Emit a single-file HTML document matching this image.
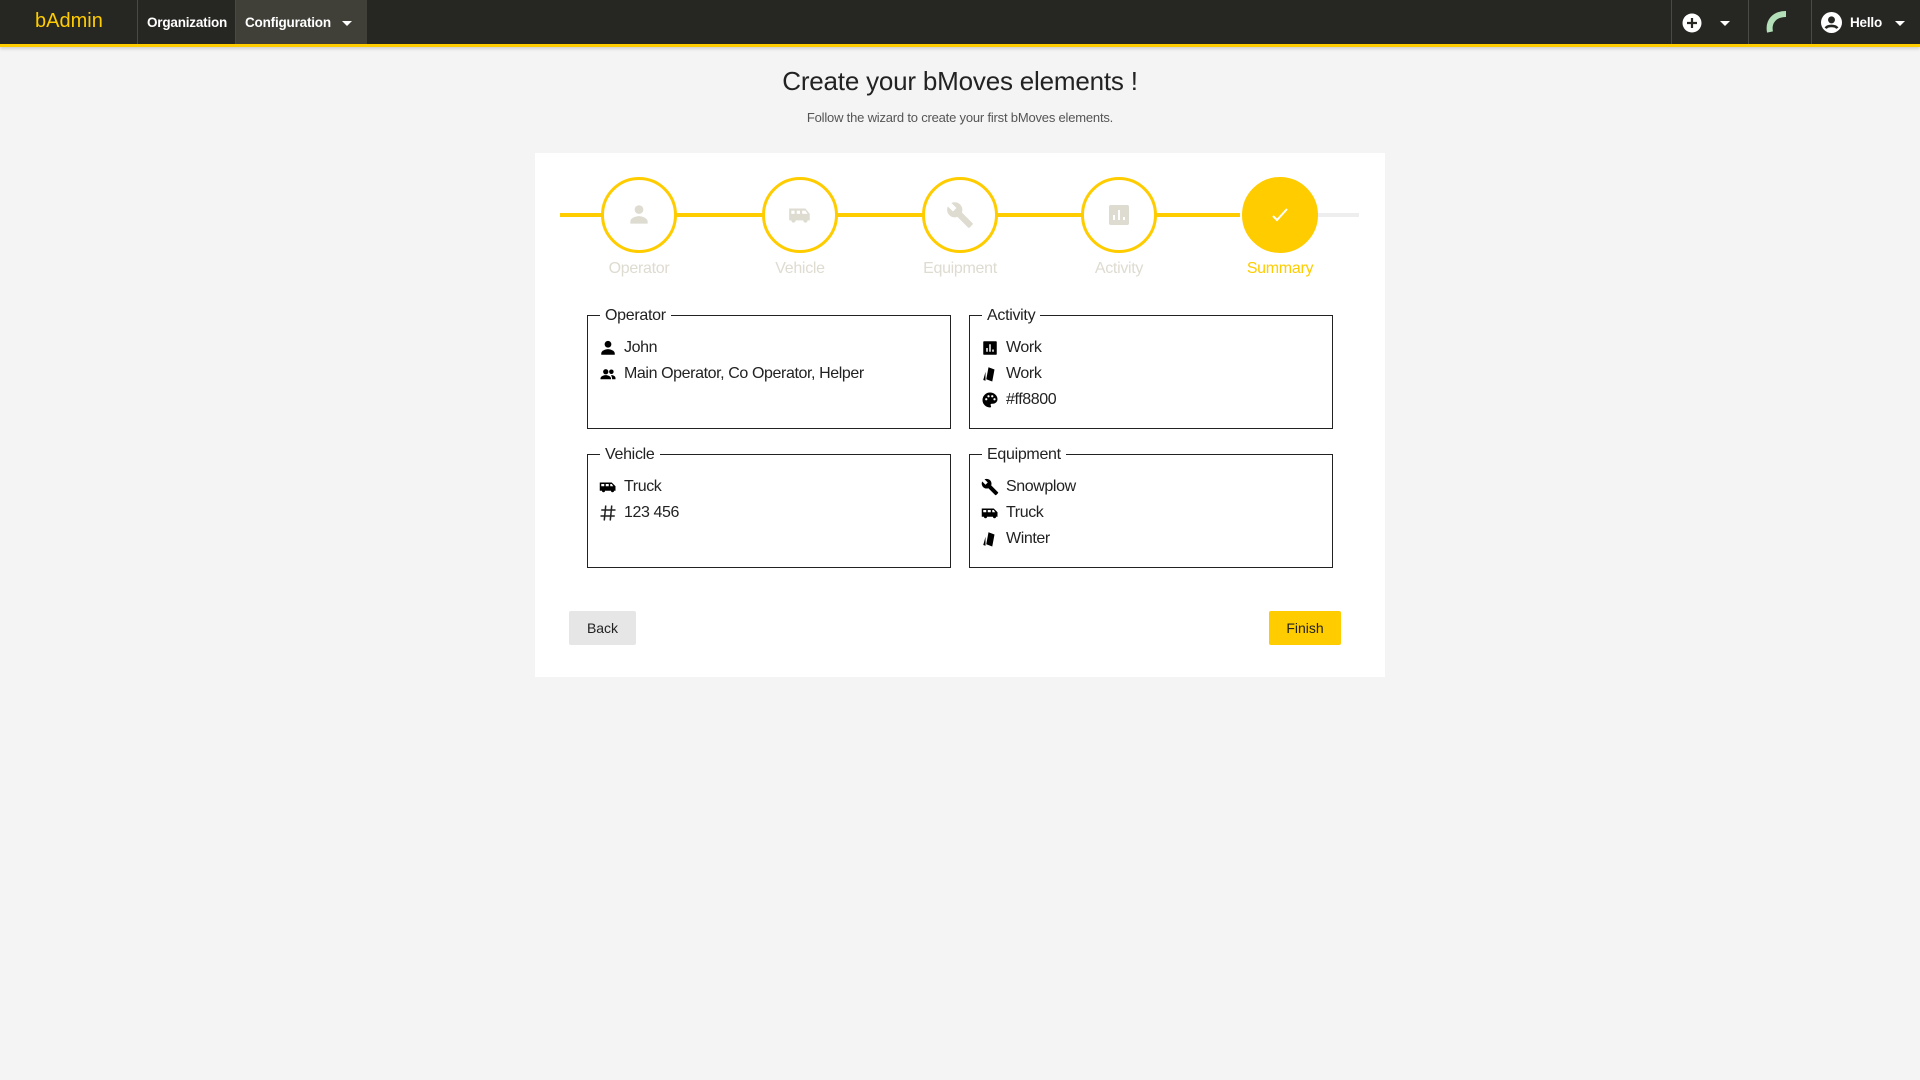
<!DOCTYPE html>
<html><head><meta charset="utf-8"><style>
*{margin:0;padding:0;box-sizing:border-box}
body{width:1920px;height:1080px;background:#f4f4f4;font-family:"Liberation Sans",sans-serif;position:relative;overflow:hidden;color:#222}
.a{position:absolute}
.nav{left:0;top:0;width:1920px;background:#262622;border-bottom:3px solid #ffcc00;box-shadow:0 2px 3px rgba(0,0,0,.15);height:47px}
.sep{top:0;width:1px;height:44px;background:#4a4a44}
.nt{color:#fff;font-size:13.5px;font-weight:bold;top:15px;letter-spacing:-0.2px}
.circ{width:76px;height:76px;border-radius:50%;border:3px solid #ffcc00;background:#fff;top:177px;display:flex;align-items:center;justify-content:center}
.lbl{top:260px;width:160px;text-align:center;font-size:16px;color:#dedbd0;letter-spacing:-0.3px}
.fs{border:1px solid #222;width:364px;height:114px}
.lg{top:-9px;left:12px;background:#fff;padding:0 5px;font-size:16px;letter-spacing:-0.3px}
.it{left:11px;font-size:16px;display:flex;align-items:center;letter-spacing:-0.4px}
.it svg{width:18px;height:18px;margin-right:7px;flex-shrink:0}
.btn{height:34px;top:611px;border-radius:2px;font-size:14px;display:flex;align-items:center;justify-content:center}
</style></head><body>
<div class="a nav"></div>
<div class="a" style="left:35px;top:10px;font-size:20px;color:#ffcc00">bAdmin</div>
<div class="a sep" style="left:137px"></div>
<div class="a nt" style="left:147px">Organization</div>
<div class="a" style="left:236px;top:0;width:131px;height:44px;background:#404038"></div>
<div class="a sep" style="left:235px"></div>
<div class="a nt" style="left:245px">Configuration</div>
<div class="a" style="left:342px;top:21px;border-left:5px solid transparent;border-right:5px solid transparent;border-top:5px solid #fff"></div>
<div class="a sep" style="left:1671px"></div>
<div class="a sep" style="left:1748px"></div>
<div class="a sep" style="left:1811px"></div>
<svg class="a" style="left:1682px;top:13px" width="20" height="20" viewBox="0 0 20 20"><circle cx="10" cy="10" r="9.5" fill="#fff"/><path d="M10 5v10M5 10h10" stroke="#262622" stroke-width="2.2"/></svg>
<div class="a" style="left:1720px;top:21px;border-left:5px solid transparent;border-right:5px solid transparent;border-top:5px solid #fff"></div>
<svg class="a" style="left:1764px;top:8px" width="28" height="26" viewBox="0 0 28 26"><path d="M6 24C4 14 10 6 22 6" stroke="#b3dfb8" stroke-width="6" fill="none"/></svg>
<svg class="a" style="left:1821px;top:12px" width="21" height="21" viewBox="0 0 20 20"><circle cx="10" cy="10" r="10" fill="#fff"/><circle cx="10" cy="7.5" r="3.3" fill="#262622"/><path d="M4.5 15.5c1.5-3 9.5-3 11 0" stroke="#262622" stroke-width="2.5" fill="none"/></svg>
<div class="a nt" style="left:1850px">Hello</div>
<div class="a" style="left:1895px;top:21px;border-left:5px solid transparent;border-right:5px solid transparent;border-top:5px solid #fff"></div>

<div class="a" style="left:0;width:1920px;top:66px;text-align:center;font-size:26px;color:#222;letter-spacing:-0.2px">Create your bMoves elements !</div>
<div class="a" style="left:0;width:1920px;top:110px;text-align:center;font-size:13px;color:#555;letter-spacing:-0.2px">Follow the wizard to create your first bMoves elements.</div>

<div class="a" style="left:535px;top:153px;width:850px;height:524px;background:#fff"></div>
<div class="a" style="left:560px;top:213px;width:680px;height:4px;background:#ffcc00"></div>
<div class="a" style="left:1280px;top:213px;width:79px;height:4px;background:#eeeeee"></div>

<div class="a circ" style="left:601px"><svg width="26" height="26" viewBox="0 0 24 24"><circle cx="12" cy="7" r="4" fill="#dedbd0"/><path d="M4 20v-2c0-3 5-5 8-5s8 2 8 5v2z" fill="#dedbd0"/></svg></div>
<div class="a circ" style="left:762px"><svg width="28" height="26" viewBox="0 0 24 24"><path d="M2 6h15l4 5v6h-2a2 2 0 0 1-4 0H8a2 2 0 0 1-4 0H2z" fill="#dedbd0"/><path d="M4 8h3v3H4zM9 8h3v3H9zM14 8h3l2 3h-5z" fill="#fff"/></svg></div>
<div class="a circ" style="left:922px"><svg width="28" height="28" viewBox="0 0 24 24"><path d="M22.7 19l-9.1-9.1c.9-2.3.4-5-1.5-6.9-2-2-5-2.4-7.4-1.3L9 6 6 9 1.6 4.7C.4 7.1.9 10.1 2.9 12.1c1.9 1.9 4.6 2.4 6.9 1.5l9.1 9.1c.4.4 1 .4 1.4 0l2.3-2.3c.5-.4.5-1.1.1-1.4z" fill="#dedbd0"/></svg></div>
<div class="a circ" style="left:1081px"><svg width="24" height="24" viewBox="0 0 24 24"><rect x="2" y="2" width="20" height="20" rx="2" fill="#dedbd0"/><path d="M7 17v-5M12 17V7M17 17v-3" stroke="#fff" stroke-width="2"/></svg></div>
<div class="a circ" style="left:1242px;background:#ffcc00"><svg width="24" height="24" viewBox="0 0 24 24"><path d="M5 13l4 4L19 6" stroke="#fff" stroke-width="2" fill="none"/></svg></div>

<div class="a lbl" style="left:559px">Operator</div>
<div class="a lbl" style="left:720px">Vehicle</div>
<div class="a lbl" style="left:880px">Equipment</div>
<div class="a lbl" style="left:1039px">Activity</div>
<div class="a lbl" style="left:1200px;color:#ffcc00">Summary</div>

<div class="a fs" style="left:587px;top:315px"><div class="a lg">Operator</div>
 <div class="a it" style="top:23px"><svg viewBox="0 0 24 24"><circle cx="12" cy="7" r="4.5"/><path d="M3 21v-2c0-3.5 6-5.5 9-5.5s9 2 9 5.5v2z"/></svg>John</div>
 <div class="a it" style="top:49px"><svg viewBox="0 0 24 24"><circle cx="9" cy="9" r="3.5"/><circle cx="16.5" cy="9" r="3"/><path d="M2 18c0-3 4-4.5 7-4.5s7 1.5 7 4.5v1H2zM16 13.5c3 0 6 1.2 6 4v1.5h-4.5c0-2-.7-4-1.5-5.5z"/></svg>Main Operator, Co Operator, Helper</div>
</div>
<div class="a fs" style="left:969px;top:315px"><div class="a lg">Activity</div>
 <div class="a it" style="top:23px"><svg viewBox="0 0 24 24"><rect x="3" y="3" width="18" height="18" rx="1"/><path d="M8 17v-5M12 17V7M16 17v-3" stroke="#fff" stroke-width="2"/></svg>Work</div>
 <div class="a it" style="top:49px"><svg viewBox="0 0 24 24"><path d="M10 3l8 3-3 16-8-3zM6 9l-3 11 3 1z"/></svg>Work</div>
 <div class="a it" style="top:75px"><svg viewBox="0 0 24 24"><path d="M12 2a10 10 0 0 0 0 20c1 0 1.5-.8 1.5-1.5 0-.8-.8-1.2-.8-2s.7-1.5 1.5-1.5H16a6 6 0 0 0 6-6c0-5-4.5-9-10-9z"/><circle cx="7" cy="11" r="1.5" fill="#fff"/><circle cx="10" cy="7" r="1.5" fill="#fff"/><circle cx="15" cy="7" r="1.5" fill="#fff"/><circle cx="18" cy="11" r="1.5" fill="#fff"/></svg>#ff8800</div>
</div>
<div class="a fs" style="left:587px;top:454px"><div class="a lg">Vehicle</div>
 <div class="a it" style="top:23px"><svg viewBox="0 0 24 24"><path d="M1 6h16l5 5v6h-2a2 2 0 0 1-4 0H8a2 2 0 0 1-4 0H1z"/><path d="M3 8h4v3H3zM9 8h4v3H9zM15 8h2l2 3h-4z" fill="#fff"/></svg>Truck</div>
 <div class="a it" style="top:49px"><svg viewBox="0 0 24 24"><path d="M9 2L7 22M17 2l-2 20M3 8h19M2 16h19" stroke="#222" stroke-width="2" fill="none"/></svg>123 456</div>
</div>
<div class="a fs" style="left:969px;top:454px"><div class="a lg">Equipment</div>
 <div class="a it" style="top:23px"><svg viewBox="0 0 24 24"><path d="M22.7 19l-9.1-9.1c.9-2.3.4-5-1.5-6.9-2-2-5-2.4-7.4-1.3L9 6 6 9 1.6 4.7C.4 7.1.9 10.1 2.9 12.1c1.9 1.9 4.6 2.4 6.9 1.5l9.1 9.1c.4.4 1 .4 1.4 0l2.3-2.3c.5-.4.5-1.1.1-1.4z"/></svg>Snowplow</div>
 <div class="a it" style="top:49px"><svg viewBox="0 0 24 24"><path d="M1 6h16l5 5v6h-2a2 2 0 0 1-4 0H8a2 2 0 0 1-4 0H1z"/><path d="M3 8h4v3H3zM9 8h4v3H9zM15 8h2l2 3h-4z" fill="#fff"/></svg>Truck</div>
 <div class="a it" style="top:75px"><svg viewBox="0 0 24 24"><path d="M10 3l8 3-3 16-8-3zM6 9l-3 11 3 1z"/></svg>Winter</div>
</div>

<div class="a btn" style="left:569px;width:67px;background:#e6e6e6">Back</div>
<div class="a btn" style="left:1269px;width:72px;background:#ffcc00">Finish</div>
</body></html>
